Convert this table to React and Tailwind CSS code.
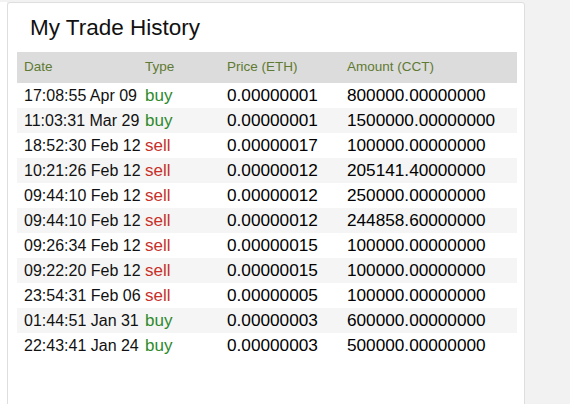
const trades = [
  { date: "17:08:55 Apr 09", type: "buy", price: "0.00000001", amount: "800000.00000000" },
  { date: "11:03:31 Mar 29", type: "buy", price: "0.00000001", amount: "1500000.00000000" },
  { date: "18:52:30 Feb 12", type: "sell", price: "0.00000017", amount: "100000.00000000" },
  { date: "10:21:26 Feb 12", type: "sell", price: "0.00000012", amount: "205141.40000000" },
  { date: "09:44:10 Feb 12", type: "sell", price: "0.00000012", amount: "250000.00000000" },
  { date: "09:44:10 Feb 12", type: "sell", price: "0.00000012", amount: "244858.60000000" },
  { date: "09:26:34 Feb 12", type: "sell", price: "0.00000015", amount: "100000.00000000" },
  { date: "09:22:20 Feb 12", type: "sell", price: "0.00000015", amount: "100000.00000000" },
  { date: "23:54:31 Feb 06", type: "sell", price: "0.00000005", amount: "100000.00000000" },
  { date: "01:44:51 Jan 31", type: "buy", price: "0.00000003", amount: "600000.00000000" },
  { date: "22:43:41 Jan 24", type: "buy", price: "0.00000003", amount: "500000.00000000" },
];

const TradeRow = ({ trade, index }) => (
  <div
    className={
      "flex h-[25px] items-center " + (index % 2 === 1 ? "bg-[#f5f5f5]" : "bg-white")
    }
  >
    <div className="w-[121px] pl-[7px] text-[16px] text-[#111] whitespace-nowrap">
      {trade.date}
    </div>
    <div
      className={
        "w-[82px] pl-[7px] text-[17px] " +
        (trade.type === "buy" ? "text-[#2d8a2d]" : "text-[#c8302a]")
      }
    >
      {trade.type}
    </div>
    <div className="w-[120px] pl-[7px] text-[17.2px] text-black">{trade.price}</div>
    <div className="flex-1 pl-[7px] text-[17.2px] text-black">{trade.amount}</div>
  </div>
);

export default function App() {
  return (
    <div className="flex h-[404px] overflow-hidden bg-[#f2f2f2] pt-[2px] font-['Liberation_Sans',Arial,sans-serif]">
      <div className="w-[7px] shrink-0 bg-white" />
      <div className="h-[430px] w-[518px] shrink-0 rounded-[3px] border border-[#dedede] bg-white pl-[9px] pr-[7px] pt-[12px]">
        <h1 className="pl-[13px] text-[22.5px] leading-[26px] text-[#111]">My Trade History</h1>
        <div className="mt-[11px]">
          <div className="flex h-[31px] items-center bg-[#dcdcdc] text-[13.5px] text-[#5f7a32]">
            <div className="w-[121px] pl-[7px]">Date</div>
            <div className="w-[82px] pl-[7px]">Type</div>
            <div className="w-[120px] pl-[7px]">Price (ETH)</div>
            <div className="flex-1 pl-[7px]">Amount (CCT)</div>
          </div>
          {trades.map((t, i) => (
            <TradeRow key={i} trade={t} index={i} />
          ))}
        </div>
      </div>
    </div>
  );
}
